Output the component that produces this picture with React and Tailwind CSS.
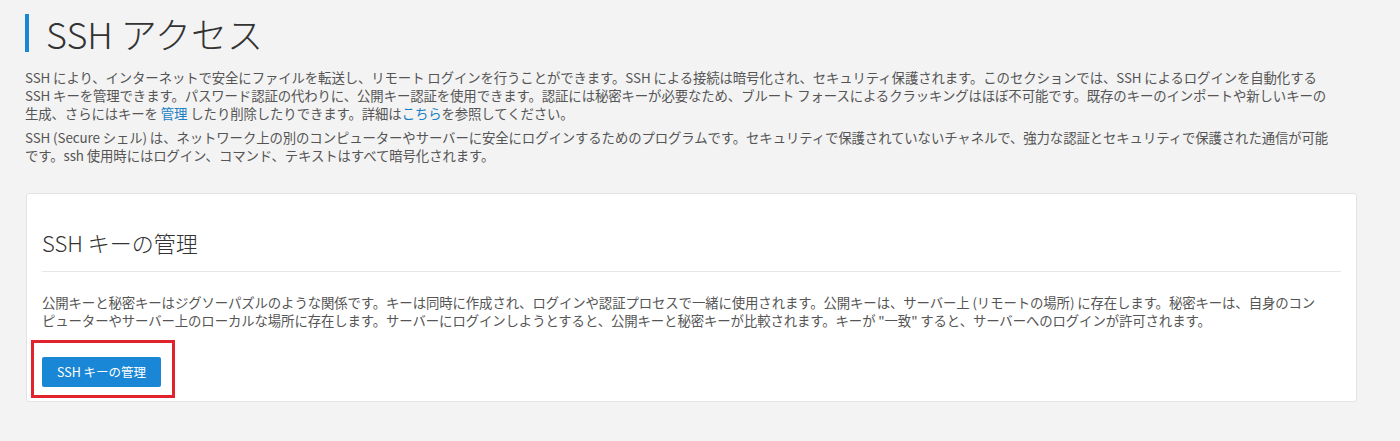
import React from 'react'

const font = { fontFamily: '"Noto Sans CJK JP", "Noto Sans", sans-serif' }

const Link = ({ children }) => (
  <a href="#" className="text-[#1a7fc4] hover:underline">
    {children}
  </a>
)

export default function App() {
  return (
    <div style={font} className="min-h-[441px] bg-[#f3f3f3] pl-[25px] pr-[43px] pt-[14px] text-[#555]">
      {/* Page title */}
      <div className="flex items-center">
        <div className="h-[38px] w-[4px] bg-[#1a88d0]" />
        <h1 className="ml-[17px] text-[36px] font-light leading-[38px] text-[#333]">SSH アクセス</h1>
      </div>

      {/* Intro */}
      <div className="mt-[16px] text-[13.4px] leading-[18px] tracking-[-0.1px]">
        <p className="whitespace-nowrap">
          SSH により、インターネットで安全にファイルを転送し、リモート ログインを行うことができます。SSH による接続は暗号化され、セキュリティ保護されます。このセクションでは、SSH によるログインを自動化する
          <br />
          SSH キーを管理できます。パスワード認証の代わりに、公開キー認証を使用できます。認証には秘密キーが必要なため、ブルート フォースによるクラッキングはほぼ不可能です。既存のキーのインポートや新しいキーの
          <br />
          生成、さらにはキーを <Link>管理</Link> したり削除したりできます。詳細は<Link>こちら</Link>を参照してください。
        </p>
        <p className="mt-[6px] whitespace-nowrap">
          SSH (Secure シェル) は、ネットワーク上の別のコンピューターやサーバーに安全にログインするためのプログラムです。セキュリティで保護されていないチャネルで、強力な認証とセキュリティで保護された通信が可能
          <br />
          です。ssh 使用時にはログイン、コマンド、テキストはすべて暗号化されます。
        </p>
      </div>

      {/* Key management card */}
      <section className="mt-[29px] ml-px rounded-[3px] border border-[#e3e3e3] bg-white px-[15px] pt-[15px] pb-[14px]">
        <h2 className="mt-[18px] text-[22px] font-light leading-[30px] text-[#333]">SSH キーの管理</h2>
        <div className="mt-[14px] h-px bg-[#e6e6e6]" />
        <p className="mt-[21px] whitespace-nowrap text-[13.4px] leading-[18px] tracking-[-0.1px]">
          公開キーと秘密キーはジグソーパズルのような関係です。キーは同時に作成され、ログインや認証プロセスで一緒に使用されます。公開キーは、サーバー上 (リモートの場所) に存在します。秘密キーは、自身のコン
          <br />
          ピューターやサーバー上のローカルな場所に存在します。サーバーにログインしようとすると、公開キーと秘密キーが比較されます。キーが "一致" すると、サーバーへのログインが許可されます。
        </p>
        <div className="relative mt-[28px] inline-block">
          <button className="h-[30px] w-[119px] rounded-[2px] bg-[#1a87d6] text-[12.5px] text-white">
            SSH キーの管理
          </button>
          <div className="pointer-events-none absolute -left-[11px] -top-[17px] h-[58px] w-[144px] border-[3px] border-[#e0232d]" />
        </div>
      </section>
    </div>
  )
}
